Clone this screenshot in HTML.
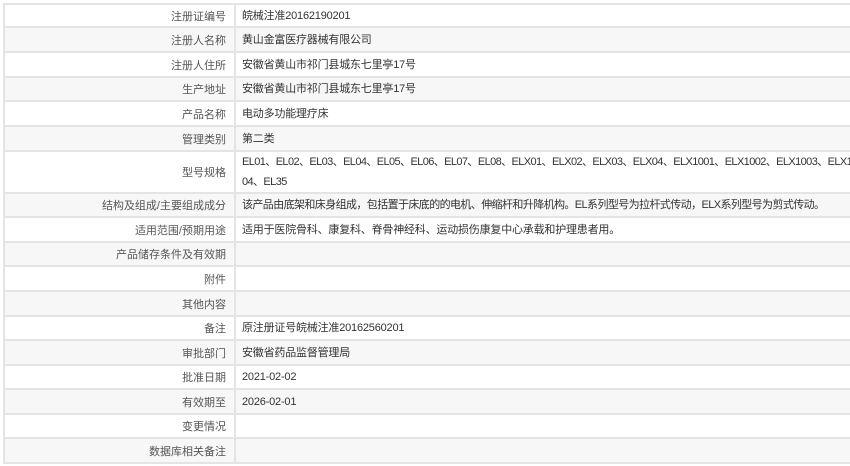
<!DOCTYPE html>
<html><head><meta charset="utf-8"><style>
body{margin:0;background:#fff;font-family:"Liberation Sans","Noto Sans CJK SC",sans-serif;font-size:11px;color:#333;overflow:hidden;}
.t{position:absolute;left:3px;top:3px;width:860px;border-left:2px solid #e4e4e4;border-top:2px solid #e4e4e4;}
.r{display:flex;border-bottom:2px solid #e4e4e4;box-sizing:border-box;}
.r:nth-child(even){background:#f7f7f7;}
.l{width:231px;box-sizing:border-box;text-align:right;padding-right:8px;color:#555;border-right:2px solid #e4e4e4;display:flex;align-items:center;justify-content:flex-end;white-space:nowrap;}
.v{flex:1;padding-left:6px;display:flex;align-items:center;line-height:20px;white-space:nowrap;overflow:hidden;letter-spacing:-0.2px;}
.n{letter-spacing:-0.6px;}
</style></head><body>
<div class="t">
<div class="r" style="height:23px"><div class="l">注册证编号</div><div class="v">皖械注准20162190201</div></div>
<div class="r" style="height:25px"><div class="l">注册人名称</div><div class="v">黄山金富医疗器械有限公司</div></div>
<div class="r" style="height:25px"><div class="l">注册人住所</div><div class="v">安徽省黄山市祁门县城东七里亭17号</div></div>
<div class="r" style="height:24px"><div class="l">生产地址</div><div class="v">安徽省黄山市祁门县城东七里亭17号</div></div>
<div class="r" style="height:25px"><div class="l">产品名称</div><div class="v">电动多功能理疗床</div></div>
<div class="r" style="height:25px"><div class="l">管理类别</div><div class="v">第二类</div></div>
<div class="r" style="height:42px"><div class="l">型号规格</div><div class="v n">EL01、EL02、EL03、EL04、EL05、EL06、EL07、EL08、ELX01、ELX02、ELX03、ELX04、ELX1001、ELX1002、ELX1003、ELX10<br>04、EL35</div></div>
<div class="r" style="height:24px"><div class="l">结构及组成/主要组成成分</div><div class="v n">该产品由底架和床身组成，包括置于床底的的电机、伸缩杆和升降机构。EL系列型号为拉杆式传动，ELX系列型号为剪式传动。</div></div>
<div class="r" style="height:25px"><div class="l">适用范围/预期用途</div><div class="v">适用于医院骨科、康复科、脊骨神经科、运动损伤康复中心承载和护理患者用。</div></div>
<div class="r" style="height:24px"><div class="l">产品储存条件及有效期</div><div class="v"></div></div>
<div class="r" style="height:25px"><div class="l">附件</div><div class="v"></div></div>
<div class="r" style="height:25px"><div class="l">其他内容</div><div class="v"></div></div>
<div class="r" style="height:24px"><div class="l">备注</div><div class="v">原注册证号皖械注准20162560201</div></div>
<div class="r" style="height:25px"><div class="l">审批部门</div><div class="v">安徽省药品监督管理局</div></div>
<div class="r" style="height:24px"><div class="l">批准日期</div><div class="v">2021-02-02</div></div>
<div class="r" style="height:25px"><div class="l">有效期至</div><div class="v">2026-02-01</div></div>
<div class="r" style="height:24px"><div class="l">变更情况</div><div class="v"></div></div>
<div class="r" style="height:25px"><div class="l">数据库相关备注</div><div class="v"></div></div>
</div>
</body></html>
